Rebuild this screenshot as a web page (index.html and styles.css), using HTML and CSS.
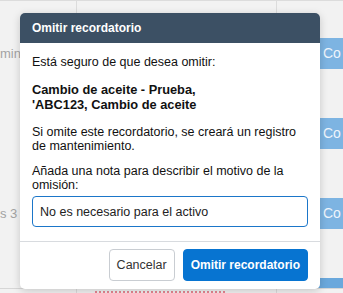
FILE: index.html
```html
<!DOCTYPE html>
<html lang="es">
<head>
    <meta charset="UTF-8">
    <title>Omitir recordatorio</title>
    <link rel="stylesheet" href="styles.css">
</head>
<body>
<!-- tabla de fondo -->
<div class="table">
    <div class="row">
        <div class="cell cell-a"><span class="muted">minc</span></div>
        <div class="cell cell-b"></div>
        <div class="cell cell-c"><span class="btn-bg">Co</span></div>
    </div>
    <div class="row">
        <div class="cell cell-a"></div>
        <div class="cell cell-b"></div>
        <div class="cell cell-c"><span class="btn-bg">Co</span></div>
    </div>
    <div class="row">
        <div class="cell cell-a"><span class="muted">s 3</span></div>
        <div class="cell cell-b"></div>
        <div class="cell cell-c"><span class="btn-bg">Co</span></div>
    </div>
    <div class="row row-short">
        <div class="cell cell-a"></div>
        <div class="cell cell-b"></div>
        <div class="cell cell-c"><span class="btn-bg btn-bg-wide"></span></div>
    </div>
    <div class="row row-last">
        <div class="cell cell-a"></div>
        <div class="cell cell-b"><span class="late"></span></div>
        <div class="cell cell-c"></div>
    </div>
</div>

<!-- ventana modal -->
<div class="modal">
    <div class="modal-head">Omitir recordatorio</div>
    <div class="modal-body">
        <p class="txt">Está seguro de que desea omitir:</p>
        <p class="txt txt-bold">Cambio de aceite - Prueba,<br>'ABC123, Cambio de aceite</p>
        <p class="txt">Si omite este recordatorio, se creará un registro de mantenimiento.</p>
        <p class="txt txt-label">Añada una nota para describir el motivo de la omisión:</p>
        <input class="note" type="text" value="No es necesario para el activo">
    </div>
    <div class="modal-foot">
        <div class="btn btn-cancel">Cancelar</div>
        <div class="btn btn-ok">Omitir recordatorio</div>
    </div>
</div>
</body>
</html>
```

FILE: styles.css
```css
html, body{
    margin: 0;
    height: 100%;
    overflow: hidden;
}
body{
    background-color: #f2f2f2;
    font-family: "Liberation Sans", Arial, sans-serif;
    font-size: 12.5px;
    color: #111;
}
.table{
    border-top: 1px solid #dcdcdc;
}
.row{
    display: grid;
    grid-template-columns: 77px 200px 1fr;
    height: 80px;
}
.row-short{
    height: 47px;
    overflow: hidden;
    border-bottom: 1px solid #d6d6d6;
}
.row-last{
    height: 4px;
}
.cell{
    box-sizing: border-box;
    border-right: 1px solid #dcdcdc;
    padding-top: 37px;
}
.cell-c{
    border-right: none;
    padding-left: 18px;
}
.cell-a{
    display: flex;
    align-items: flex-start;
}
.muted{
    display: block;
    line-height: 31px;
    font-size: 13px;
    color: #a3a3a3;
}
.btn-bg{
    display: block;
    height: 31px;
    line-height: 31px;
    padding-left: 28px;
    font-size: 14px;
    color: #eef5fc;
    background-color: #7db4e2;
    border-radius: 3px 0 0 3px;
}
.btn-bg-wide{
    background-color: #6aa8dc;
}
.row-last .cell{
    padding-top: 1px;
}
/* enlace rojo cortado por el borde inferior */
.late{
    display: block;
    width: 130px;
    height: 3px;
    margin-left: 18px;
    margin-top: 1px;
    border-top: 2px dotted #e88591;
}

.modal{
    position: absolute;
    left: 20px;
    top: 13px;
    width: 300px;
    height: 276px;
    background-color: #fff;
    border-radius: 5px;
    box-shadow: 0 2px 8px rgba(0,0,0,.18);
    overflow: hidden;
}
.modal-head{
    height: 30px;
    line-height: 30px;
    padding: 0 12px;
    background-color: #3c5064;
    color: #fff;
    font-size: 12px;
    font-weight: bold;
}
.modal-body{
    padding: 12px 12px 14px;
    border-bottom: 1px solid #d8dbdf;
}
.txt{
    margin: 0 0 14px;
    line-height: 14px;
}
.txt-bold{
    font-weight: bold;
    font-size: 12.8px;
    line-height: 15px;
    margin-top: -1px;
    margin-bottom: 13px;
}
.txt-label{
    margin-top: -3px;
    margin-bottom: 4px;
}
.note{
    display: block;
    box-sizing: border-box;
    width: 100%;
    height: 31px;
    margin: 0;
    padding: 0 7px;
    border: 1px solid #1b76c9;
    border-radius: 4px;
    font-family: "Liberation Sans", Arial, sans-serif;
    font-size: 12.5px;
    color: #222;
    outline: none;
}
.modal-foot{
    display: flex;
    justify-content: flex-end;
    gap: 8px;
    padding: 7px 12px;
}
.btn{
    box-sizing: border-box;
    height: 32px;
    line-height: 30px;
    padding: 0 7px;
    border-radius: 4px;
    border: 1px solid transparent;
}
.btn-cancel{
    border-color: #c9cdd2;
    color: #333;
    font-size: 12.5px;
}
.btn-ok{
    background-color: #0774d1;
    border-color: #0774d1;
    color: #fff;
    font-size: 12px;
    font-weight: bold;
}
```
